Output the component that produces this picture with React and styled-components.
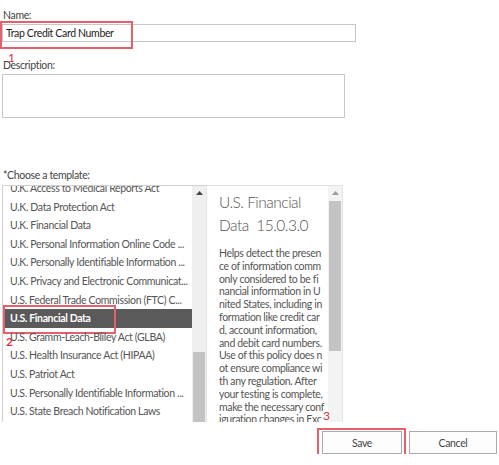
import styled, { createGlobalStyle } from "styled-components"

const GlobalStyle = createGlobalStyle`
    body {
        margin: 0;
        background: #fff;
        font-family: Lato, "Liberation Sans", sans-serif;
        font-size: 10.5px;
        letter-spacing: -0.35px;
        color: #444;
    }
`

const templates = [
    "U.K. Access to Medical Reports Act",
    "U.K. Data Protection Act",
    "U.K. Financial Data",
    "U.K. Personal Information Online Code ...",
    "U.K. Personally Identifiable Information ...",
    "U.K. Privacy and Electronic Communicat...",
    "U.S. Federal Trade Commission (FTC) C...",
    "U.S. Financial Data",
    "U.S. Gramm-Leach-Bliley Act (GLBA)",
    "U.S. Health Insurance Act (HIPAA)",
    "U.S. Patriot Act",
    "U.S. Personally Identifiable Information ...",
    "U.S. State Breach Notification Laws",
]

const selected = "U.S. Financial Data"

// description column is narrow and breaks mid-word
const descriptionLines = [
    "Helps detect the presen",
    "ce of information comm",
    "only considered to be fi",
    "nancial information in U",
    "nited States, including in",
    "formation like credit car",
    "d, account information,",
    "and debit card numbers.",
    "Use of this policy does n",
    "ot ensure compliance wi",
    "th any regulation. After",
    "your testing is complete,",
    "make the necessary conf",
    "iguration changes in Exc",
]

function UpArrow({ color }) {
    return (
        <svg width="7" height="4" viewBox="0 0 7 4">
            <polygon points="0,4 3.5,0 7,4" fill={color} />
        </svg>
    )
}

function ScrollBar({ thumbTop, thumbHeight, arrowColor, light }) {
    return (
        <Track $light={light}>
            <ArrowButton>
                <UpArrow color={arrowColor} />
            </ArrowButton>
            <Thumb $top={thumbTop} $height={thumbHeight} />
        </Track>
    )
}

export default function App() {
    return (
        <>
            <GlobalStyle />
            <Form>
                <Label>Name:</Label>
                <Field>
                    <TextInput defaultValue="Trap Credit Card Number" />
                    <Callout $left={-2} $top={-3} $width={133} $height={28} />
                    <CalloutNumber $left={6} $top={27}>1</CalloutNumber>
                </Field>

                <Label>Description:</Label>
                <TextArea />

                <TemplateLabel>*Choose a template:</TemplateLabel>
                <Picker>
                    <ListBox>
                        <Rows>
                            {templates.map((name) => (
                                <Row key={name} $selected={name === selected}>
                                    {name}
                                    {name === selected && (
                                        <>
                                            <Callout $left={0} $top={-4} $width={113} $height={29} />
                                            <CalloutNumber $left={3} $top={26}>2</CalloutNumber>
                                        </>
                                    )}
                                </Row>
                            ))}
                        </Rows>
                        <ScrollBar thumbTop={151} thumbHeight={70} arrowColor="#444" />
                    </ListBox>
                    <Details>
                        <DetailsBody>
                            <DetailsTitle>
                                U.S. Financial<br />
                                Data&nbsp;&nbsp;15.0.3.0
                            </DetailsTitle>
                            <DetailsText>
                                {descriptionLines.map((line) => (
                                    <TextLine key={line}>{line}</TextLine>
                                ))}
                            </DetailsText>
                        </DetailsBody>
                        <ScrollBar thumbTop={0} thumbHeight={150} arrowColor="#9a9a9a" light />
                    </Details>
                </Picker>

                <ButtonRow>
                    <ButtonWrap>
                        <Button>Save</Button>
                        <Callout $left={-5} $top={-3} $width={89} $height={30} />
                        <CalloutNumber $left={1} $top={-22}>3</CalloutNumber>
                    </ButtonWrap>
                    <Button $wide>Cancel</Button>
                </ButtonRow>
            </Form>
        </>
    )
}

const Form = styled.div`
    display: flex;
    flex-direction: column;
    align-items: flex-start;
    padding: 8px 0 0 2px;
    width: 497px;
`
const Label = styled.div`
    line-height: 14px;
    height: 14px;
    padding-left: 1px;
    margin-bottom: 2px;
`
const TemplateLabel = styled(Label)`
    margin-bottom: 3px;
`
const Field = styled.div`
    position: relative;
    margin-bottom: 16px;
`
const TextInput = styled.input`
    box-sizing: border-box;
    display: block;
    width: 354px;
    height: 18px;
    margin: 0;
    padding: 0 3px;
    border: 1px solid #c6c6c6;
    font-family: inherit;
    font-size: 10.5px;
    letter-spacing: -0.35px;
    color: #222;
    outline: none;
`
const TextArea = styled.textarea`
    box-sizing: border-box;
    display: block;
    width: 343px;
    height: 44px;
    margin: 0 0 50px;
    border: 1px solid #c6c6c6;
    resize: none;
    outline: none;
`
const Callout = styled.div`
    position: absolute;
    left: ${(p) => p.$left}px;
    top: ${(p) => p.$top}px;
    width: ${(p) => p.$width}px;
    height: ${(p) => p.$height}px;
    box-sizing: border-box;
    border: 2px solid #e4606b;
    pointer-events: none;
`
const CalloutNumber = styled.span`
    position: absolute;
    left: ${(p) => p.$left}px;
    top: ${(p) => p.$top}px;
    font-size: 12px;
    line-height: 14px;
    letter-spacing: 0;
    color: #d9343f;
`
const Picker = styled.div`
    display: grid;
    grid-template-columns: 204px 137px;
    height: 237px;
`
const ListBox = styled.div`
    display: flex;
    border-top: 1px solid #d0d0d0;
    border-left: 1px solid #d0d0d0;
    overflow: hidden;
`
const Rows = styled.div`
    flex: 1;
    overflow: hidden;
    margin-top: -7px;
`
const Row = styled.div`
    position: relative;
    height: 18.6px;
    line-height: 18.6px;
    padding-left: 7px;
    white-space: nowrap;
    color: ${(p) => (p.$selected ? "#fff" : "#555")};
    background: ${(p) => (p.$selected ? "#5a5a5a" : "transparent")};
    font-weight: ${(p) => (p.$selected ? 700 : 400)};
`
const Track = styled.div`
    width: 14px;
    flex: none;
    display: flex;
    flex-direction: column;
    background: ${(p) => (p.$light ? "#f3f3f3" : "#efefef")};
`
const ArrowButton = styled.div`
    height: 14px;
    display: flex;
    align-items: center;
    justify-content: center;
    padding-bottom: 1px;
`
const Thumb = styled.div`
    margin: ${(p) => p.$top}px 1px 0;
    height: ${(p) => p.$height}px;
    background: #c3c3c3;
`
const Details = styled.div`
    display: flex;
    border: 1px solid #e3e3e3;
    border-bottom: none;
    overflow: hidden;
`
const DetailsBody = styled.div`
    flex: 1;
    padding: 5px 0 0 12px;
    color: #555;
    overflow: hidden;
`
const DetailsTitle = styled.div`
    font-size: 15.5px;
    font-weight: 300;
    letter-spacing: -0.5px;
    line-height: 23px;
    margin-bottom: 10px;
    white-space: nowrap;
`
const DetailsText = styled.div`
    line-height: 12.8px;
`
const TextLine = styled.div`
    white-space: nowrap;
`
const ButtonRow = styled.div`
    display: flex;
    gap: 7px;
    align-self: flex-end;
    margin: 9px 2px 0 0;
`
const ButtonWrap = styled.div`
    position: relative;
`
const Button = styled.button`
    display: block;
    box-sizing: border-box;
    width: ${(p) => (p.$wide ? 88 : 80)}px;
    height: 23px;
    margin: 0;
    padding: 0;
    border: 1px solid #ababab;
    background: #fdfdfd;
    font-family: inherit;
    font-size: 10.5px;
    letter-spacing: -0.35px;
    color: #444;
`
